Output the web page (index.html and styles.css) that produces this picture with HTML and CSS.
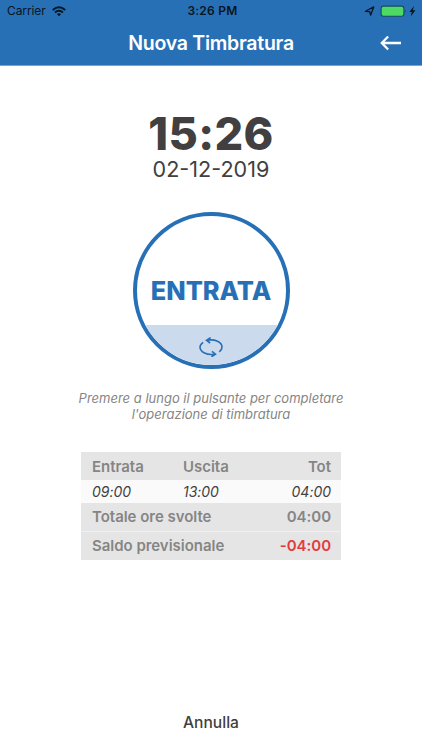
FILE: index.html
```html
<!DOCTYPE html>
<html lang="it">
<head>
<meta charset="utf-8">
<title>Nuova Timbratura</title>
<link rel="stylesheet" href="styles.css">
</head>
<body>
<header class="header">
  <div class="status">
    <div class="carrier"><span>Carrier</span>
      <svg width="14" height="11" viewBox="0 0 14 11" fill="none" stroke="#081522" stroke-width="2"><path d="M.8 3.9Q7-1.5 13.2 3.9M3 6.4Q7 3 11 6.4"/><path d="M4.9 8.1Q7 6.4 9.1 8.1L7 10.3Z" fill="#081522" stroke="none"/></svg>
    </div>
    <span class="clock">3:26 PM</span>
    <svg class="indicators" width="54" height="14" viewBox="0 0 54 14"><path d="M1.5 7.3 9.7 2.9 6.6 11.2 5.7 7.6Z" fill="none" stroke="#081522" stroke-width="1.3" stroke-linejoin="round"/><rect x="17.1" y="2.1" width="22.8" height="10.2" rx="2.2" fill="#4cd964" stroke="#174a66" stroke-width="1.1"/><path d="M41.3 5.5q1.7 1.6 0 3.2z" fill="#174a66"/><path d="M50 1.9 45.3 7.9h2.5L46.6 12.4l4.8-6.2h-2.6Z" fill="#081522"/></svg>
  </div>
  <div class="nav">
    <h1 class="title">Nuova Timbratura</h1>
    <svg class="back" width="22" height="16" viewBox="0 0 22 16" fill="none" stroke="#fff" stroke-width="2.3"><path d="M21 8H2.2M8.1 1.5 1.8 8l6.3 6.5"/></svg>
  </div>
</header>
<main class="main">
  <div class="time">15:26</div>
  <div class="date">02-12-2019</div>
  <button class="punch">
    <span class="punch-label">ENTRATA</span>
    <span class="punch-foot">
      <svg width="26" height="20" viewBox="0 0 26 20" fill="none" stroke="#2870b6" stroke-width="1.6"><path d="M9 3.2C17 1.9 24 5.1 24 10.2q0 2.5-2.7 4.7M17 17.2C9 18.6 2 15.2 2 10.1q0-2.6 3.2-4.7M12.6.6 8.5 3.2l3.6 2.8M13.4 19.8l4.1-2.6-3.6-2.8"/></svg>
    </span>
  </button>
  <p class="hint">Premere a lungo il pulsante per completare<br><span class="hint-end">l'operazione di timbratura</span></p>
  <section class="table">
    <div class="row head"><span>Entrata</span><span>Uscita</span><span class="right">Tot</span></div>
    <div class="row entry"><span>09:00</span><span>13:00</span><span class="right">04:00</span></div>
    <div class="row total"><span class="wide">Totale ore svolte</span><span class="right">04:00</span></div>
    <div class="row balance"><span class="wide">Saldo previsionale</span><span class="right negative">-04:00</span></div>
  </section>
</main>
<footer class="footer">Annulla</footer>
</body>
</html>
```
FILE: styles.css
```css
* { box-sizing: border-box; }
body {
  margin: 0;
  height: 750px;
  display: flex;
  flex-direction: column;
  background: #fff;
  color: #413f40;
  font-family: Inter, "Liberation Sans", sans-serif;
  overflow: hidden;
}
.header {
  height: 66px;
  background: #2870b6;
  border-bottom: 1px solid #79a6d1;
}
.status {
  height: 22px;
  padding: 0 4px 0 7px;
  display: grid;
  grid-template-columns: 1fr auto 1fr;
  align-items: center;
  color: #081522;
  font-size: 12px;
  line-height: 22px;
}
.carrier { display: flex; align-items: center; gap: 6px; letter-spacing: -.1px; }
.clock { font-weight: 600; letter-spacing: .25px; }
.indicators { justify-self: end; }
.nav {
  height: 42px;
  padding: 0 20px;
  display: grid;
  grid-template-columns: 1fr auto 1fr;
  align-items: center;
}
.title {
  grid-column: 2;
  margin: 0;
  color: #fff;
  font-size: 19.5px;
  font-weight: 600;
  letter-spacing: -.25px;
  line-height: 41px;
}
.back { justify-self: end; }
.main {
  flex: 1;
  display: flex;
  flex-direction: column;
  align-items: center;
}
.time {
  margin-top: 43px;
  font-size: 45px;
  font-weight: 800;
  letter-spacing: .4px;
  line-height: 50px;
}
.date { font-size: 21.6px; line-height: 20px; }
.punch {
  width: 157px;
  height: 157px;
  margin: 33px 0 0;
  padding: 0;
  display: flex;
  flex-direction: column;
  border: 4px solid #2870b6;
  border-radius: 50%;
  background: #fff;
  overflow: hidden;
  font-family: inherit;
  color: #2870b6;
}
.punch-label {
  height: 109px;
  width: 100%;
  padding-top: 40px;
  text-align: center;
  font-size: 25.4px;
  font-weight: 800;
  line-height: 69px;
}
.punch-foot {
  flex: 1;
  width: 100%;
  padding-top: 12px;
  display: flex;
  justify-content: center;
  background: #cbdbed;
}
.hint {
  margin: 21px 0 0;
  color: #858585;
  font-size: 13px;
  font-style: italic;
  line-height: 16px;
  text-align: center;
}
.table {
  width: 260px;
  margin-top: 30px;
  background: #e5e5e5;
  color: #858585;
  font-size: 15px;
  font-weight: 600;
  letter-spacing: -.03px;
}
.row {
  height: 29px;
  padding: 0 10px 0 11px;
  display: grid;
  grid-template-columns: 91px 1fr auto;
  align-items: center;
}
.head { height: 28px; }
.entry {
  height: 23px;
  background: #fafafa;
  color: #413f40;
  font-size: 14px;
  font-weight: 400;
  font-style: italic;
}
.total { height: 28px; padding-bottom: 1px; }
.balance { border-top: 1px solid #f0f0f0; padding-bottom: 2px; }
.wide { grid-column: span 2; }
.right { text-align: right; }
.negative { color: #e23c3f; }
.footer {
  height: 54px;
  text-align: center;
  font-size: 15.6px;
  font-weight: 500;
  line-height: 54px;
}
```
